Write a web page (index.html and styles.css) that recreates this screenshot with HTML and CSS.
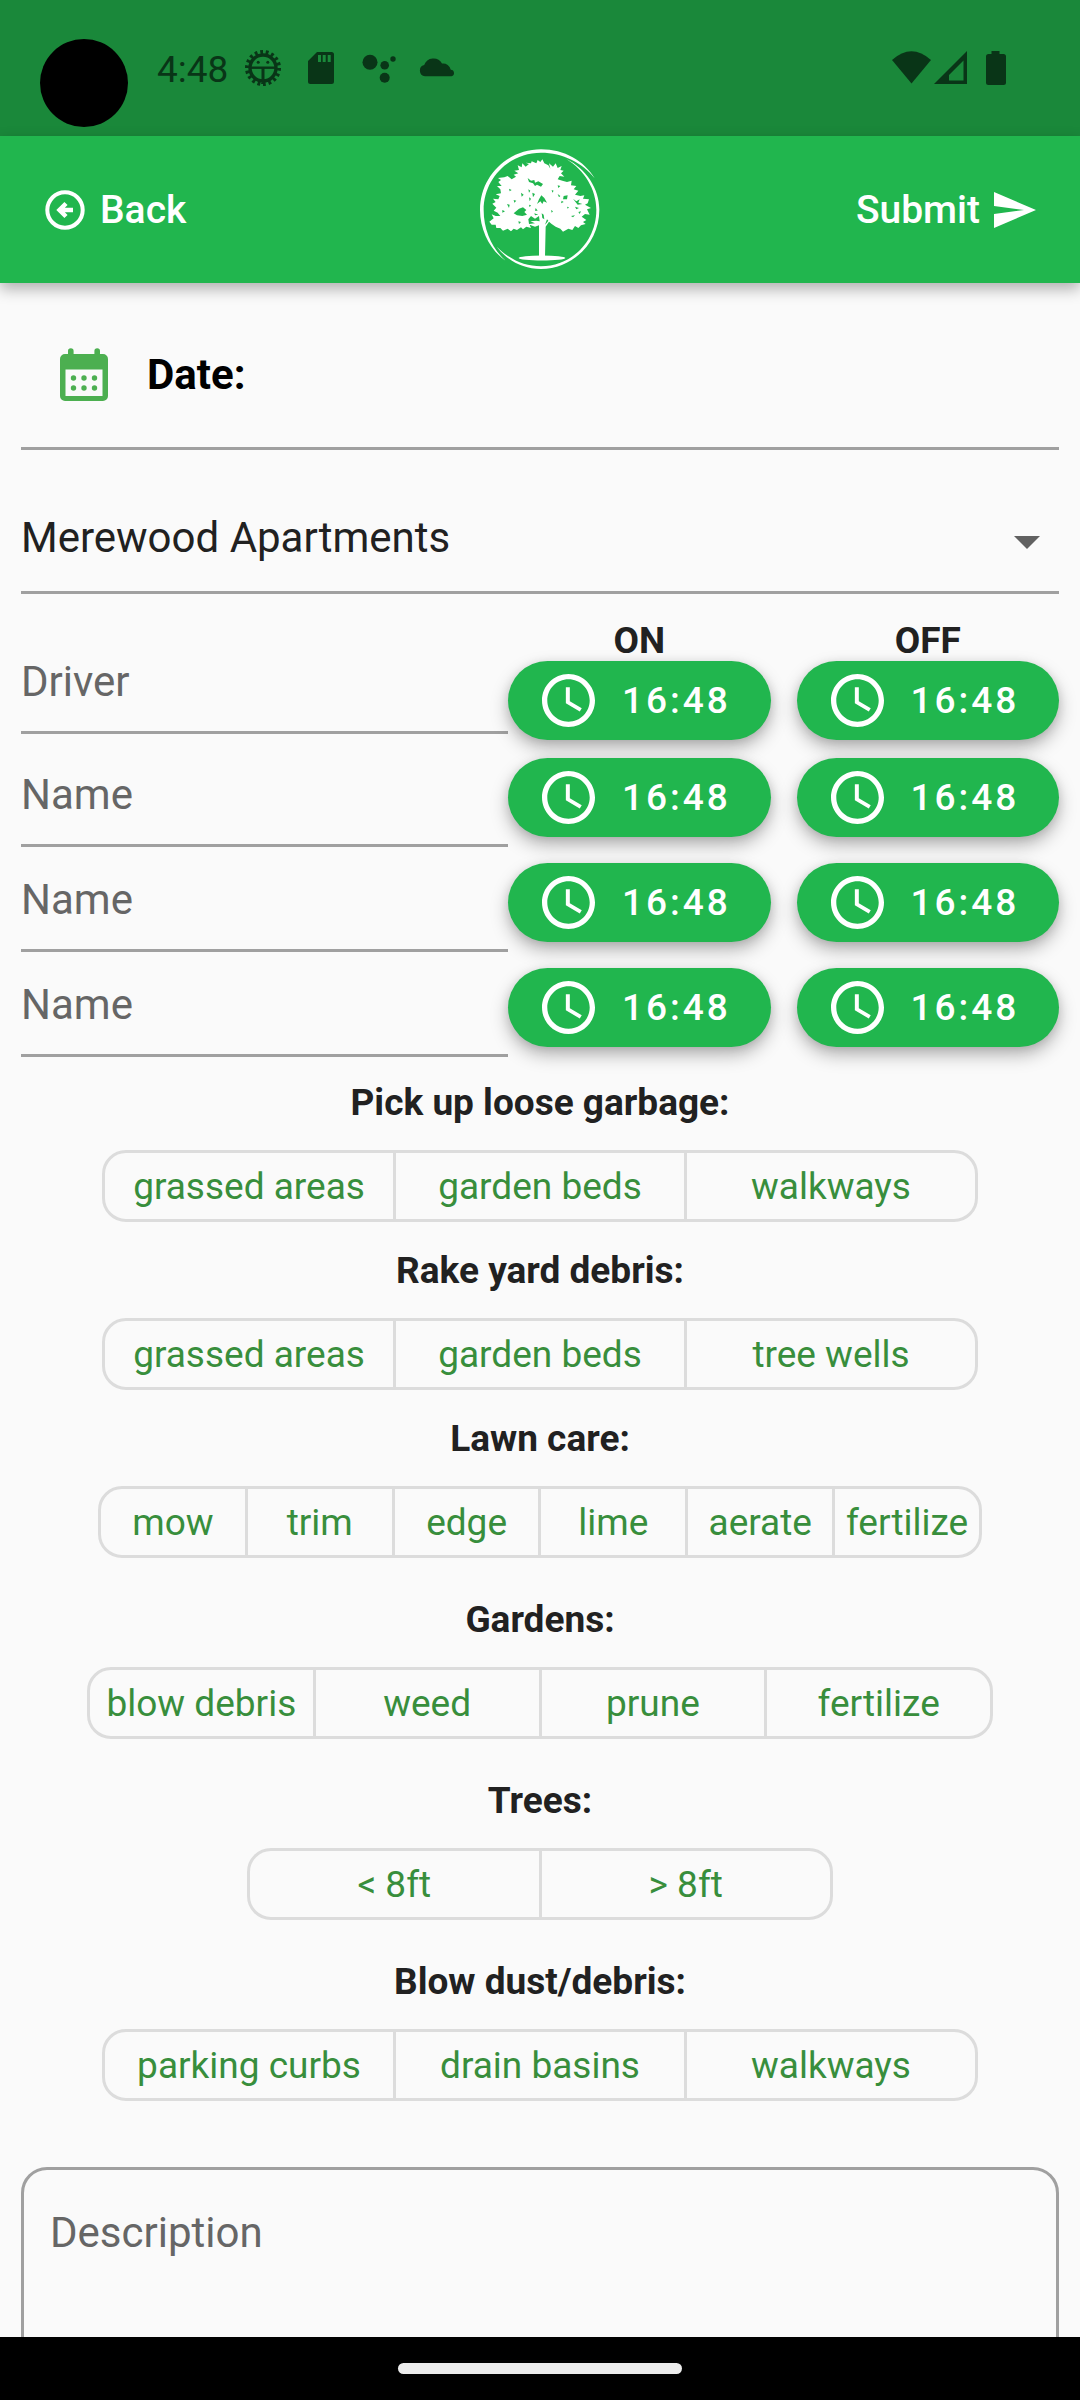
FILE: index.html
```html
<!DOCTYPE html>
<html lang="en">
<head>
<meta charset="utf-8">
<meta name="viewport" content="width=device-width, initial-scale=1">
<title>Job report</title>
<link rel="stylesheet" href="styles.css">
</head>
<body>
<svg class="defs" aria-hidden="true">
  <symbol id="clock" viewBox="2 2 20 20"><path d="M11.99 2C6.47 2 2 6.48 2 12s4.47 10 9.99 10C17.52 22 22 17.52 22 12S17.52 2 11.99 2zM12 20c-4.42 0-8-3.58-8-8s3.58-8 8-8 8 3.58 8 8-3.58 8-8 8zm.5-13H11v6l5.250 3.150.75-1.230-4.500-2.670z"/></symbol>
</svg>

<div class="status-bar">
  <span class="camera"></span>
  <div class="status-left">
    <span class="status-time">4:48</span>
    <svg class="status-notifications" viewBox="244 48 212 40" aria-hidden="true">
      <g fill="none" stroke="#093517">
        <circle cx="263" cy="68" r="13" stroke-width="3.400"/>
        <circle cx="263" cy="68" r="16" stroke-width="4" pathLength="36" stroke-dasharray="1 1"/>
        <path d="M250 67.700h26" stroke-width="2.400"/>
        <path d="M263 68v13" stroke-width="3"/>
      </g>
      <g fill="#093517">
        <circle cx="258.200" cy="62.300" r="1.500"/><circle cx="267.800" cy="62.300" r="1.500"/>
        <path fill-rule="evenodd" d="M317 52h14.500a2.500 2.500 0 0 1 2.500 2.500v27a2.500 2.500 0 0 1-2.500 2.500h-21a2.500 2.500 0 0 1-2.500-2.500v-20.500zM318 55v7h3v-7zM322.700 55v7h3v-7zM327.700 55v7h3v-7z"/>
        <circle cx="370" cy="62.300" r="7.500"/><circle cx="384.700" cy="65.300" r="4.300"/><circle cx="393" cy="59" r="2.700"/><circle cx="384.700" cy="77.700" r="5"/>
        <path d="M425 76.300a5.700 5.700 0 0 1-.8-11.200A9.800 9.800 0 0 1 442 63.500a7.800 7.800 0 0 1 8.800 6.300a3.300 3.300 0 0 1 .7 6.500z"/>
      </g>
    </svg>
  </div>
  <svg class="status-system" viewBox="890 48 118 40" aria-hidden="true">
    <g fill="#093517">
      <path d="M911.500 83.500 892 60q19.500-17.500 39 0z"/>
      <path fill-rule="evenodd" d="M967 51v33h-33zM963.500 60.500 949 75v5.500h14.500z"/>
      <path d="M991.500 51h8v3h4a2.500 2.500 0 0 1 2.500 2.500v26a2.500 2.500 0 0 1-2.500 2.500h-15a2.500 2.500 0 0 1-2.500-2.500v-26a2.500 2.500 0 0 1 2.500-2.500h3z"/>
    </g>
  </svg>
</div>

<header class="app-bar">
  <button type="button" class="bar-button">
    <svg class="icon-back" viewBox="-1 -1 42 42" aria-hidden="true"><circle cx="20" cy="20" r="17.700" fill="none" stroke="#fff" stroke-width="4"/><path d="M28 20H15M21 13.500 14.500 20l6.500 6.500" fill="none" stroke="#fff" stroke-width="4.500"/></svg>
    Back
  </button>
  <svg class="logo" viewBox="54 39 366 366" role="img" aria-label="Tree logo">
    <g fill="#fff">
      <path d="M135 375C90 345 57 285 57 222 57 120 140 40 240 40c70 0 130 35 161 87C365 80 305 50 240 50 146 50 68 125 68 222c0 63 27 118 67 153z"/>
      <path d="M316 69c59 29 99 89 99 152 0 99-80 178-175 178-55 0-100-24-133-67 38 38 83 59 133 59 90 0 166-73 166-170 0-61-36-119-90-152z"/>
      <path d="M85 257 98 247 92 235 104 240 118 240 110 230 98 224 106 215 94 203 104 198 96 188 112 190 116 180 104 175 120 172 118 160 108 150 122 150 112 138 120 132 111 126 130 124 140 120 152 130 165 122 158 116 172 112 160 104 174 102 170 88 182 94 184 82 194 92 204 84 194 80 210 82 212 76 226 82 230 72 238 78 244 70 250 82 262 88 268 98 264 82 276 92 284 82 290 96 302 90 298 102 308 104 300 112 310 122 296 120 290 130 304 134 318 138 332 134 330 148 346 150 338 160 352 164 342 176 358 180 370 178 366 188 384 190 380 202 372 206 390 216 378 220 386 236 372 234 362 242 376 252 366 258 374 264 360 268 352 276 342 270 334 282 322 278 306 287 298 278 284 272 272 264 264 257 254 272 252 362 234 362 234 268 222 272 206 266 210 276 196 272 186 280 180 274 168 282 158 278 150 286 140 278 126 284 118 276 106 276 104 266 92 266z"/>
      <ellipse cx="243" cy="366" rx="70" ry="7.500"/>
    </g>
    <g fill="#21b64e">
      <path d="M158 232 174 218 186 214 196 222 190 228 198 236 184 240 168 238zM200 126 210 134 220 132 222 140 232 136 246 144 240 152 228 146 222 150 216 142 204 138zM241 178 250 186 258 200 248 196 244 204 238 196 228 204 234 190zM210 240 222 248 234 240 236 256 226 254 208 256 222 262 204 264 202 250zM242 232 248 236 250 250 244 246zM256 262 262 254 258 250 252 266zM180 170 188 176 182 182zM202 160 208 164 204 170zM214 170 222 174 216 184zM144 158 152 162 146 166zM138 204 146 206 144 216zM166 194 158 192 160 200zM204 184 210 188 206 196zM204 206 210 208 206 214zM290 148 298 150 292 156zM272 162 278 164 274 170zM308 180 320 178 318 190 306 190zM290 174 298 180 294 184zM302 194 308 198 300 202zM336 188 346 196 356 190 352 200 364 204 350 206zM342 212 354 216 346 220zM318 212 324 214 320 218zM330 240 342 238 336 244zM270 222 276 226 272 230zM224 216 230 224 222 224zM352 228 360 226 356 234zM124 222 132 226 124 230zM172 256 180 258 174 264zM220 232 232 236 222 238z"/>
    </g>
  </svg>
  <button type="submit" form="report" class="bar-button">
    Submit
    <svg class="icon-send" viewBox="2 3 21 18" aria-hidden="true"><path fill="#fff" d="M2.010 21 23 12 2.010 3 2 10l15 2-15 2z"/></svg>
  </button>
</header>

<main>
<form id="report">
  <div class="date-field">
    <svg class="icon-calendar" viewBox="0 0 48 54" aria-hidden="true">
      <path fill="#4caf50" fill-rule="evenodd" d="M8 3a2.800 2.800 0 0 1 5.600 0v3h20.800V3a2.800 2.800 0 0 1 5.600 0v3h3a5 5 0 0 1 5 5v37a5 5 0 0 1-5 5H5a5 5 0 0 1-5-5V11a5 5 0 0 1 5-5h3zM5.500 21.500V48h37V21.500z"/>
      <g fill="#4caf50"><circle cx="13.500" cy="30" r="2.700"/><circle cx="24" cy="30" r="2.700"/><circle cx="34.500" cy="30" r="2.700"/><circle cx="13.500" cy="40" r="2.700"/><circle cx="24" cy="40" r="2.700"/><circle cx="34.500" cy="40" r="2.700"/></g>
    </svg>
    <label for="date">Date:</label>
    <input id="date" type="text">
  </div>

  <div class="site-field">
    <select aria-label="Site"><option>Merewood Apartments</option></select>
    <svg class="icon-caret" viewBox="0 0 26 13" aria-hidden="true"><path fill="#616161" d="M0 0h26L13 13z"/></svg>
  </div>

  <div class="crew-row crew-first">
    <input class="crew-name" type="text" placeholder="Driver" aria-label="Driver">
    <div class="times">
      <div class="time-column"><span class="time-title">ON</span><button type="button" class="time"><svg aria-hidden="true"><use href="#clock"/></svg>16:48</button></div>
      <div class="time-column"><span class="time-title">OFF</span><button type="button" class="time"><svg aria-hidden="true"><use href="#clock"/></svg>16:48</button></div>
    </div>
  </div>
  <div class="crew-row">
    <input class="crew-name" type="text" placeholder="Name" aria-label="Name">
    <div class="times">
      <button type="button" class="time"><svg aria-hidden="true"><use href="#clock"/></svg>16:48</button>
      <button type="button" class="time"><svg aria-hidden="true"><use href="#clock"/></svg>16:48</button>
    </div>
  </div>
  <div class="crew-row">
    <input class="crew-name" type="text" placeholder="Name" aria-label="Name">
    <div class="times">
      <button type="button" class="time"><svg aria-hidden="true"><use href="#clock"/></svg>16:48</button>
      <button type="button" class="time"><svg aria-hidden="true"><use href="#clock"/></svg>16:48</button>
    </div>
  </div>
  <div class="crew-row">
    <input class="crew-name" type="text" placeholder="Name" aria-label="Name">
    <div class="times">
      <button type="button" class="time"><svg aria-hidden="true"><use href="#clock"/></svg>16:48</button>
      <button type="button" class="time"><svg aria-hidden="true"><use href="#clock"/></svg>16:48</button>
    </div>
  </div>

  <section class="task">
    <h2>Pick up loose garbage:</h2>
    <div class="toggles three"><button type="button">grassed areas</button><button type="button">garden beds</button><button type="button">walkways</button></div>
  </section>
  <section class="task">
    <h2>Rake yard debris:</h2>
    <div class="toggles three"><button type="button">grassed areas</button><button type="button">garden beds</button><button type="button">tree wells</button></div>
  </section>
  <section class="task">
    <h2>Lawn care:</h2>
    <div class="toggles six"><button type="button">mow</button><button type="button">trim</button><button type="button">edge</button><button type="button">lime</button><button type="button">aerate</button><button type="button">fertilize</button></div>
  </section>
  <section class="task spaced">
    <h2>Gardens:</h2>
    <div class="toggles four"><button type="button">blow debris</button><button type="button">weed</button><button type="button">prune</button><button type="button">fertilize</button></div>
  </section>
  <section class="task spaced">
    <h2>Trees:</h2>
    <div class="toggles two"><button type="button">&lt; 8ft</button><button type="button">&gt; 8ft</button></div>
  </section>
  <section class="task spaced">
    <h2>Blow dust/debris:</h2>
    <div class="toggles three"><button type="button">parking curbs</button><button type="button">drain basins</button><button type="button">walkways</button></div>
  </section>

  <textarea class="description" placeholder="Description" aria-label="Description"></textarea>
</form>
</main>

<div class="nav-bar"><span class="nav-handle"></span></div>
</body>
</html>
```
FILE: styles.css
```css
* {
  box-sizing: border-box;
}

body {
  margin: 0;
  height: 100vh;
  display: flex;
  flex-direction: column;
  background: #fafafa;
  color: #212121;
  font-family: Roboto, "Liberation Sans", sans-serif;
}

button,
input,
select,
textarea {
  margin: 0;
  padding: 0;
  border: 0;
  border-radius: 0;
  background: none;
  color: inherit;
  font: inherit;
  outline: none;
}

.defs {
  display: none;
}

/* System status bar */
.status-bar {
  flex: none;
  height: 136px;
  padding: 39px 72px 0 40px;
  display: flex;
  align-items: flex-start;
  background: #1a883a;
}

.camera {
  width: 88px;
  height: 88px;
  border-radius: 50%;
  background: #000;
}

.status-left {
  display: flex;
  align-items: flex-start;
  gap: 16px;
  margin: 9px auto 0 29px;
}

.status-time {
  font-size: 37px;
  line-height: 44px;
  color: #093517;
}

.status-notifications {
  width: 212px;
  height: 40px;
}

.status-system {
  width: 118px;
  height: 40px;
  margin-top: 9px;
}

/* App bar */
.app-bar {
  flex: none;
  position: relative;
  z-index: 1;
  height: 147px;
  padding: 0 44px;
  display: grid;
  grid-template-columns: 1fr auto 1fr;
  align-items: center;
  background: #21b64e;
  box-shadow: 0 6px 14px rgba(0, 0, 0, 0.3);
}

.bar-button {
  display: flex;
  align-items: center;
  gap: 14px;
  justify-self: start;
  color: #fff;
  font-size: 39px;
  line-height: 46px;
  font-weight: 500;
}

.bar-button:last-child {
  justify-self: end;
}

.icon-back {
  width: 42px;
  height: 42px;
}

.icon-send {
  width: 42px;
  height: 36px;
}

.logo {
  width: 122px;
  height: 122px;
}

/* Scrolling form */
main {
  flex: 1;
  min-height: 0;
  overflow-y: auto;
  scrollbar-width: none;
}

form {
  padding: 0 21px;
}

.date-field {
  height: 167px;
  padding: 20px 0 0 39px;
  display: flex;
  align-items: center;
  border-bottom: 3px solid #a0a0a0;
  color: #000;
  font-size: 42px;
  line-height: 50px;
}

.date-field label {
  margin-left: 39px;
  font-weight: 700;
}

.date-field input {
  flex: 1;
  min-width: 0;
  margin-left: 16px;
}

.icon-calendar {
  width: 48px;
  height: 54px;
}

.site-field {
  height: 144px;
  padding: 34px 19px 0 0;
  display: flex;
  align-items: center;
  border-bottom: 3px solid #a0a0a0;
}

.site-field select {
  flex: 1;
  height: 50px;
  appearance: none;
  font-size: 42px;
  line-height: 50px;
}

.icon-caret {
  width: 26px;
  height: 13px;
  margin-top: 9px;
}

/* Crew hours */
.crew-row {
  height: 105px;
  display: grid;
  grid-template-columns: 1fr 551px;
  align-items: end;
}

.crew-name {
  width: 100%;
  height: 78px;
  padding-bottom: 25px;
  border-bottom: 3px solid #a0a0a0;
  font-size: 42px;
  line-height: 50px;
}

.crew-name::placeholder,
.description::placeholder {
  color: #666;
  opacity: 1;
}

.times {
  display: flex;
  gap: 26px;
  margin-bottom: 10px;
}

.times > * {
  flex: 1;
}

.crew-first {
  height: 124px;
  margin-top: 24px;
}

.crew-first .crew-name {
  margin-bottom: 8px;
}

.crew-first .times {
  margin-bottom: 2px;
}

.time-column {
  display: flex;
  flex-direction: column;
}

.time-title {
  text-align: center;
  font-size: 37px;
  line-height: 41px;
  font-weight: 700;
}

.time {
  height: 79px;
  padding: 0 0 0 34px;
  display: flex;
  align-items: center;
  gap: 27px;
  border-radius: 40px;
  background: #21b64e;
  box-shadow: 0 8px 18px rgba(0, 0, 0, 0.28), 0 2px 10px rgba(0, 0, 0, 0.1);
  color: #fff;
  font-size: 37px;
  line-height: 43px;
  font-weight: 500;
  letter-spacing: 3px;
}

.time svg {
  width: 53px;
  height: 53px;
  fill: #fff;
}

/* Task toggles */
.task {
  display: flex;
  flex-direction: column;
  align-items: center;
  gap: 26px;
  padding-top: 27px;
}

.crew-row + .task {
  padding-top: 24px;
}

.task.spaced {
  padding-top: 40px;
}

.task h2 {
  margin: 0;
  font-size: 37px;
  line-height: 43px;
  font-weight: 700;
}

.toggles {
  display: flex;
  max-width: 100%;
  height: 72px;
  border: 3px solid #dcdcdc;
  border-radius: 24px;
}

.toggles button {
  flex: 1 1 0;
  color: #388e3c;
  font-size: 37px;
  line-height: 43px;
  white-space: nowrap;
}

.toggles button + button {
  border-left: 3px solid #dcdcdc;
}

.two {
  width: 586px;
}

.three {
  width: 876px;
}

.four {
  width: 906px;
}

.six {
  width: 884px;
}

.description {
  display: block;
  width: 100%;
  height: 320px;
  margin-top: 66px;
  padding: 38px 26px;
  border: 3px solid #a0a0a0;
  border-radius: 26px;
  font-size: 42px;
  line-height: 50px;
  resize: none;
}

/* System navigation */
.nav-bar {
  flex: none;
  height: 63px;
  display: flex;
  align-items: center;
  justify-content: center;
  background: #000;
}

.nav-handle {
  width: 284px;
  height: 11px;
  border-radius: 6px;
  background: #ececec;
}
```
